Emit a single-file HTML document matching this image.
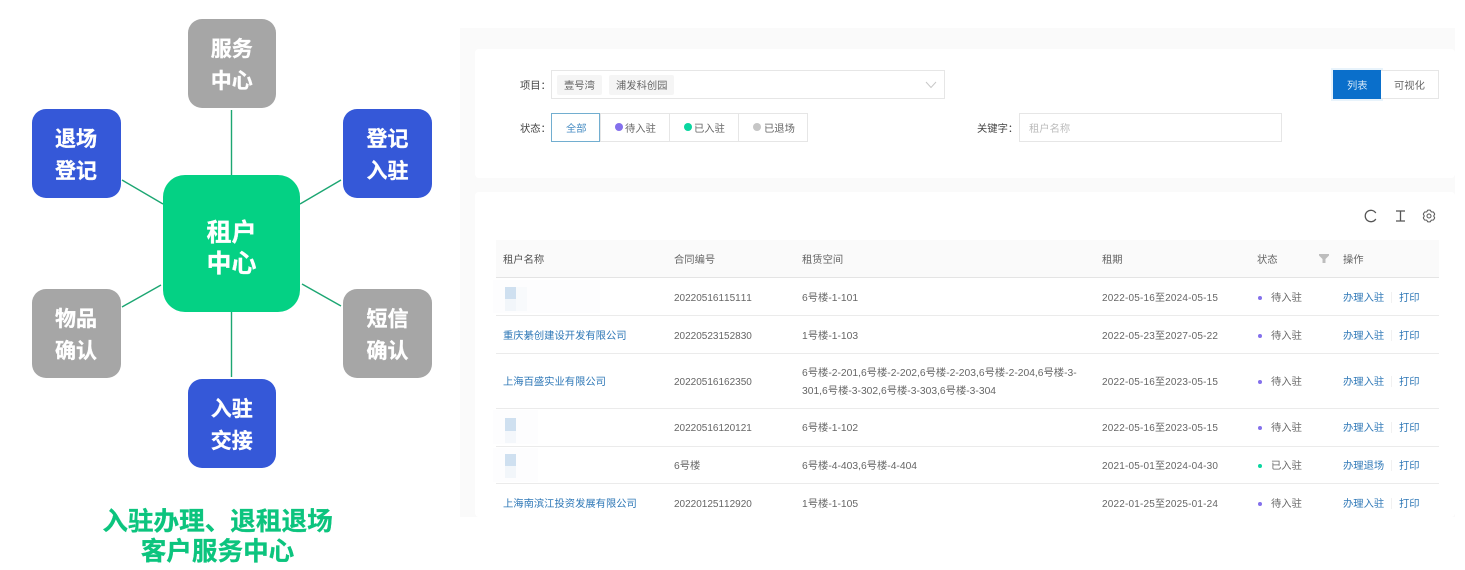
<!DOCTYPE html>
<html lang="zh-CN">
<head>
<meta charset="utf-8">
<title>客户服务中心</title>
<style>
html,body{margin:0;padding:0;background:#fff;}
body{position:relative;width:1465px;height:570px;overflow:hidden;font-family:"Liberation Sans","Noto Sans CJK SC",sans-serif;font-kerning:none;}
.b{position:absolute;width:89px;height:89px;border-radius:14px;color:#fff;font-weight:700;font-size:21px;line-height:32px;text-align:center;box-sizing:border-box;padding-top:15px;-webkit-text-stroke:.3px #fff;}
.blue{background:#3558d8}.grey{background:#a6a6a6}
#c{position:absolute;left:163px;top:175px;width:137px;height:137px;border-radius:22px;background:#04d184;color:#fff;font-weight:700;font-size:25px;line-height:31px;text-align:center;box-sizing:border-box;padding-top:43px;-webkit-text-stroke:.3px #fff;}
.title{position:absolute;left:60px;width:315px;text-align:center;color:#0cc47e;font-weight:700;font-size:25.6px;line-height:30px;white-space:nowrap;-webkit-text-stroke:.3px #0cc47e;}
#p{position:absolute;left:460px;top:28px;width:995px;height:489px;background:#fafafa;}
.card{position:absolute;left:475px;width:980px;background:#fff;border-radius:4px;}
.t{position:absolute;font-size:10.3px;line-height:16px;margin-top:2px;color:#666;white-space:nowrap;filter:blur(.25px);}
.n{font-size:10px}
.r{letter-spacing:.18px}
.d{color:#444}
.l{color:#2f78b7}
.box{position:absolute;box-sizing:border-box;border:1px solid #e6e6e6;background:#fff;}
.tag{position:absolute;background:#f5f5f5;border-radius:2px;top:75px;height:20px;}
.dot{position:absolute;border-radius:50%;}
.s{width:4.500px;height:4.500px;left:1257.500px;}
.hl{position:absolute;left:496px;width:943px;height:1px;background:#ebebeb;}
.sep{position:absolute;width:1px;height:11px;background:#f1f1f1;left:1391px;}
.m{position:absolute;}
</style>
</head>
<body>
<svg width="460" height="480" style="position:absolute;left:0;top:0" fill="none" stroke="#1ca672" stroke-width="1.4">
<path d="M231.5 110V175M231.5 312V377M122 180L163 204M341 180L300 204M122 307L161 285M341 306L302 284"/>
</svg>
<div class="b grey" style="left:187.500px;width:88.500px;top:19px">服务<br>中心</div>
<div class="b blue" style="left:31.500px;top:109px">退场<br>登记</div>
<div class="b blue" style="left:343px;top:109px">登记<br>入驻</div>
<div class="b grey" style="left:31.500px;top:289px">物品<br>确认</div>
<div class="b grey" style="left:343px;top:289px">短信<br>确认</div>
<div class="b blue" style="left:187.500px;width:88.500px;top:379px">入驻<br>交接</div>
<div id="c">租户<br>中心</div>
<div class="title" style="top:506.500px">入驻办理、退租退场</div>
<div class="title" style="top:536.500px">客户服务中心</div>

<div id="p"></div>
<div class="card" style="top:49px;height:129px"></div>
<div class="card" style="top:192px;height:325px"></div>

<div class="t d" style="left:520px;top:77px">项目：</div>
<div class="box" style="left:551px;top:70px;width:394px;height:29px"></div>
<div class="tag" style="left:557px;width:45px"></div>
<div class="tag" style="left:609px;width:65px"></div>
<div class="t" style="left:564px;top:77px">壹号湾</div>
<div class="t" style="left:616px;top:77px">浦发科创园</div>
<svg class="m" style="left:925px;top:81px" width="12" height="8" fill="none" stroke="#c8c8c8"><path d="M1 1L6 6.500L11 1"/></svg>

<div class="t d" style="left:520px;top:120px">状态：</div>
<div class="box" style="left:600px;top:113px;width:70px;height:29px"></div>
<div class="box" style="left:669px;top:113px;width:70px;height:29px"></div>
<div class="box" style="left:738px;top:113px;width:70px;height:29px"></div>
<div class="box" style="left:551px;top:113px;width:49px;height:29px;border-color:#72aed0"></div>
<div class="t l" style="left:566px;top:120px;color:#4a8ec4">全部</div>
<div class="dot" style="left:615px;top:123px;width:8px;height:8px;background:#8470ec"></div>
<div class="t" style="left:625px;top:120px">待入驻</div>
<div class="dot" style="left:684px;top:123px;width:8px;height:8px;background:#0ad6a0"></div>
<div class="t" style="left:694px;top:120px">已入驻</div>
<div class="dot" style="left:753px;top:123px;width:8px;height:8px;background:#c6c6c6"></div>
<div class="t" style="left:764px;top:120px">已退场</div>

<div class="m" style="left:1331px;top:68px;width:52px;height:33px;background:#e8f3fb"></div>
<div class="m" style="left:1333px;top:70px;width:48px;height:29px;background:#0a6fcb"></div>
<div class="box" style="left:1381px;top:70px;width:58px;height:29px;border-left:0"></div>
<div class="t" style="left:1347px;top:77px;color:#d5e8f8">列表</div>
<div class="t" style="left:1394px;top:77px">可视化</div>
<div class="t d" style="left:977px;top:120px">关键字：</div>
<div class="box" style="left:1019px;top:113px;width:263px;height:29px"></div>
<div class="t" style="left:1029px;top:120px;color:#bdbdbd">租户名称</div>

<svg class="m" style="left:1363px;top:208px" width="76" height="16" fill="none" stroke="#555" stroke-width="1.300">
<path d="M12.800 5A5.700 5.700 0 1 0 12.800 11"/>
<path d="M33 3H42M33 13H42M37.500 3V13"/>
<path d="M64.750 2.130L67.250 2.130L68.350 3.930L70.460 3.990L71.710 6.150L70.700 8L71.710 9.850L70.460 12.010L68.350 12.070L67.250 13.870L64.750 13.870L63.650 12.070L61.540 12.010L60.290 9.850L61.300 8L60.290 6.150L61.540 3.990L63.650 3.930Z" stroke-width="1" stroke-linejoin="round"/>
<circle cx="66" cy="8" r="2" stroke-width="1"/>
</svg>

<div class="m" style="left:496px;top:240px;width:943px;height:37px;background:#fafafa"></div>
<div class="hl" style="top:277px;background:#e4e4e4"></div>
<div class="hl" style="top:315px"></div>
<div class="hl" style="top:353px"></div>
<div class="hl" style="top:408px"></div>
<div class="hl" style="top:446px"></div>
<div class="hl" style="top:483px"></div>

<div class="t" style="left:503px;top:251px;color:#555">租户名称</div>
<div class="t" style="left:674px;top:251px">合同编号</div>
<div class="t" style="left:802px;top:251px">租赁空间</div>
<div class="t" style="left:1102px;top:251px">租期</div>
<div class="t" style="left:1257px;top:251px">状态</div>
<svg class="m" style="left:1319px;top:254px" width="10" height="9"><path d="M0 0H10V1.500L6.500 5V9H3.500V5L0 1.500Z" fill="#bdbdbd"/></svg>
<div class="t" style="left:1343px;top:251px">操作</div>

<!-- mosaics -->
<div class="m" style="left:493px;top:280px;width:107px;height:33px;background:#fdfdfe"></div>
<div class="m" style="left:505px;top:287px;width:11px;height:12px;background:#cfe0f0"></div>
<div class="m" style="left:516px;top:287px;width:11px;height:24px;background:#f8fafc"></div>
<div class="m" style="left:505px;top:299px;width:11px;height:12px;background:#f2f6fa"></div>
<div class="m" style="left:493px;top:410px;width:45px;height:34px;background:#fdfdfe"></div>
<div class="m" style="left:505px;top:418px;width:11px;height:13px;background:#cfe0f0"></div>
<div class="m" style="left:505px;top:431px;width:11px;height:12px;background:#f4f7fb"></div>
<div class="m" style="left:493px;top:448px;width:45px;height:34px;background:#fdfdfe"></div>
<div class="m" style="left:505px;top:454px;width:11px;height:12px;background:#cfe0f0"></div>
<div class="m" style="left:505px;top:466px;width:11px;height:12px;background:#f2f6fa"></div>

<div class="t n" style="left:674px;top:289px">20220516115111</div>
<div class="t" style="left:802px;top:289px">6号楼-1-101</div>
<div class="t n r" style="left:1102px;top:289px">2022-05-16至2024-05-15</div>
<div class="dot s" style="top:295.500px;background:#8470ec"></div>
<div class="t" style="left:1271px;top:289px">待入驻</div>
<div class="t l" style="left:1343px;top:289px">办理入驻</div><div class="sep" style="top:292px"></div>
<div class="t l" style="left:1399px;top:289px">打印</div>

<div class="t l" style="left:503px;top:327px">重庆綦创建设开发有限公司</div>
<div class="t n" style="left:674px;top:327px">20220523152830</div>
<div class="t" style="left:802px;top:327px">1号楼-1-103</div>
<div class="t n r" style="left:1102px;top:327px">2022-05-23至2027-05-22</div>
<div class="dot s" style="top:333.500px;background:#8470ec"></div>
<div class="t" style="left:1271px;top:327px">待入驻</div>
<div class="t l" style="left:1343px;top:327px">办理入驻</div><div class="sep" style="top:330px"></div>
<div class="t l" style="left:1399px;top:327px">打印</div>

<div class="t l" style="left:503px;top:373px">上海百盛实业有限公司</div>
<div class="t n" style="left:674px;top:373px">20220516162350</div>
<div class="t" style="left:802px;top:363px;line-height:18px">6号楼-2-201,6号楼-2-202,6号楼-2-203,6号楼-2-204,6号楼-3-<br>301,6号楼-3-302,6号楼-3-303,6号楼-3-304</div>
<div class="t n r" style="left:1102px;top:373px">2022-05-16至2023-05-15</div>
<div class="dot s" style="top:379.500px;background:#8470ec"></div>
<div class="t" style="left:1271px;top:373px">待入驻</div>
<div class="t l" style="left:1343px;top:373px">办理入驻</div><div class="sep" style="top:376px"></div>
<div class="t l" style="left:1399px;top:373px">打印</div>

<div class="t n" style="left:674px;top:419px">20220516120121</div>
<div class="t" style="left:802px;top:419px">6号楼-1-102</div>
<div class="t n r" style="left:1102px;top:419px">2022-05-16至2023-05-15</div>
<div class="dot s" style="top:425.500px;background:#8470ec"></div>
<div class="t" style="left:1271px;top:419px">待入驻</div>
<div class="t l" style="left:1343px;top:419px">办理入驻</div><div class="sep" style="top:422px"></div>
<div class="t l" style="left:1399px;top:419px">打印</div>

<div class="t" style="left:674px;top:457px">6号楼</div>
<div class="t" style="left:802px;top:457px">6号楼-4-403,6号楼-4-404</div>
<div class="t n r" style="left:1102px;top:457px">2021-05-01至2024-04-30</div>
<div class="dot s" style="top:463.500px;background:#0ad6a0"></div>
<div class="t" style="left:1271px;top:457px">已入驻</div>
<div class="t l" style="left:1343px;top:457px">办理退场</div><div class="sep" style="top:460px"></div>
<div class="t l" style="left:1399px;top:457px">打印</div>

<div class="t l" style="left:503px;top:495px">上海南滨江投资发展有限公司</div>
<div class="t n" style="left:674px;top:495px">20220125112920</div>
<div class="t" style="left:802px;top:495px">1号楼-1-105</div>
<div class="t n r" style="left:1102px;top:495px">2022-01-25至2025-01-24</div>
<div class="dot s" style="top:501.500px;background:#8470ec"></div>
<div class="t" style="left:1271px;top:495px">待入驻</div>
<div class="t l" style="left:1343px;top:495px">办理入驻</div><div class="sep" style="top:498px"></div>
<div class="t l" style="left:1399px;top:495px">打印</div>
</body>
</html>
